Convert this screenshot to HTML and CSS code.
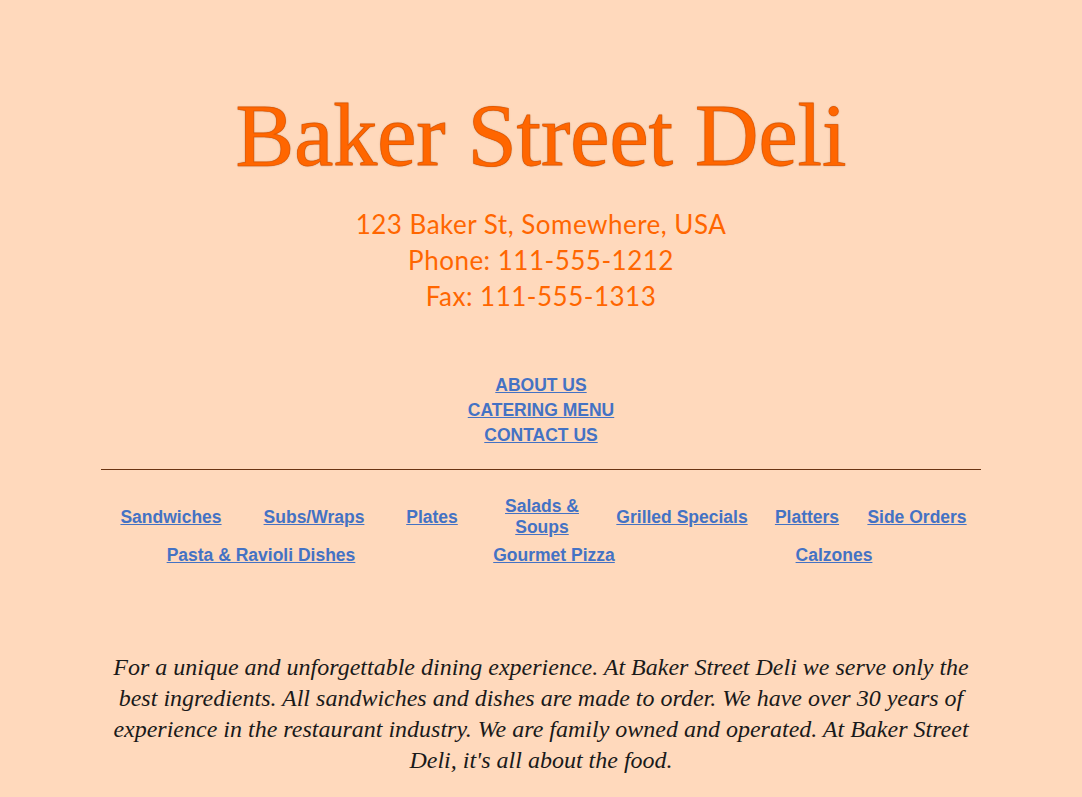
FILE: index.html
```html
<!DOCTYPE html>
<html>
<head>
<meta charset="utf-8">
<title>Baker Street Deli</title>
<link rel="stylesheet" href="styles.css">
</head>
<body>
<div class="page">
  <header class="header">
    <h1 class="title">Baker Street Deli</h1>
    <div class="address">
      <div>123 Baker St, Somewhere, USA</div>
      <div>Phone: 111-555-1212</div>
      <div>Fax: 111-555-1313</div>
    </div>
    <nav class="topnav">
      <a href="#">ABOUT US</a>
      <a href="#">CATERING MENU</a>
      <a href="#">CONTACT US</a>
    </nav>
  </header>
  <hr class="rule">
  <div class="menu-row row1">
    <div class="cell c1"><a href="#">Sandwiches</a></div>
    <div class="cell c2"><a href="#">Subs/Wraps</a></div>
    <div class="cell c3"><a href="#">Plates</a></div>
    <div class="cell c4"><a href="#">Salads &amp; Soups</a></div>
    <div class="cell c5"><a href="#">Grilled Specials</a></div>
    <div class="cell c6"><a href="#">Platters</a></div>
    <div class="cell c7"><a href="#">Side Orders</a></div>
  </div>
  <div class="menu-row row2">
    <div class="cell d1"><a href="#">Pasta &amp; Ravioli Dishes</a></div>
    <div class="cell d2"><a href="#">Gourmet Pizza</a></div>
    <div class="cell d3"><a href="#">Calzones</a></div>
  </div>
  <p class="intro">For a unique and unforgettable dining experience. At Baker Street Deli we serve only the best ingredients. All sandwiches and dishes are made to order. We have over 30 years of experience in the restaurant industry. We are family owned and operated. At Baker Street Deli, it's all about the food.</p>
</div>
</body>
</html>
```
FILE: styles.css
```css
html, body {
  margin: 0;
  padding: 0;
  background: #FFD9BC;
}
.page {
  width: 880px;
  margin: 0 auto;
  text-align: center;
}
.header {
  padding-top: 86px;
}
.title {
  margin: 0;
  font-family: "Liberation Serif", "Times New Roman", serif;
  font-weight: normal;
  font-size: 88px;
  line-height: 100px;
  color: #FF6600;
  -webkit-text-stroke: 0.8px #E65A00;
  text-shadow: 0 0 1.5px rgba(70, 50, 40, 0.7);
}
.address {
  margin-top: 20px;
  font-family: Lato, "Noto Sans", sans-serif;
  font-size: 26px;
  letter-spacing: 0.5px;
  line-height: 36px;
  color: #FF6600;
}
.topnav {
  margin-top: 59px;
  display: flex;
  flex-direction: column;
  align-items: center;
  font-family: "Liberation Sans", Arial, sans-serif;
  font-weight: bold;
  font-size: 17.5px;
  line-height: 25px;
}
a {
  color: #4472C4;
  text-decoration: underline;
}
.rule {
  margin: 21px 0 0 0;
  border: 0;
  height: 1px;
  background: #6A3412;
}
.menu-row {
  display: flex;
  align-items: center;
  font-family: "Liberation Sans", Arial, sans-serif;
  font-weight: bold;
  font-size: 17.5px;
  line-height: 21px;
}
.row1 {
  margin-top: 26px;
}
.row2 {
  margin-top: 7px;
}
.cell {
  text-align: center;
}
.c1 { width: 140px; }
.c2 { width: 146px; }
.c3 { width: 90px; }
.c4 { width: 130px; padding: 0 22px; box-sizing: border-box; }
.c5 { width: 150px; }
.c6 { width: 100px; }
.c7 { width: 120px; }
.d1 { width: 320px; }
.d2 { width: 266px; }
.d3 { width: 294px; }
.intro {
  margin: 86px 0 0 0;
  font-family: "Liberation Serif", "Times New Roman", serif;
  font-style: italic;
  font-size: 24px;
  line-height: 31px;
  color: #1a1a1a;
}
```
